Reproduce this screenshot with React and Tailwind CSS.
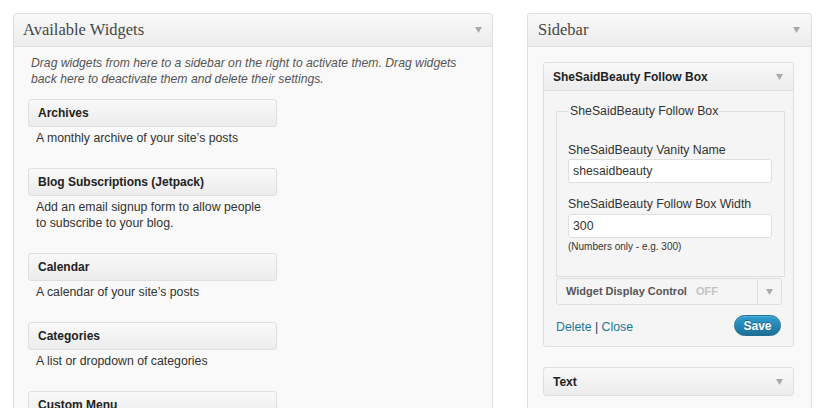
import React from "react";

const Arrow = ({ className = "" }) => (
  <svg width="7" height="6" viewBox="0 0 7 6" className={className}>
    <path d="M0 0 L7 0 L3.5 6 Z" fill="#a9a9a9" />
  </svg>
);

const sans = { fontFamily: '"Liberation Sans", Arial, sans-serif' };
const serif = { fontFamily: '"Liberation Serif", Georgia, serif' };

function WidgetItem({ title, desc }) {
  return (
    <div className="mb-[22px]">
      <div className="w-[249px] h-[28px] border border-[#dfdfdf] rounded-[3px] bg-gradient-to-b from-[#f9f9f9] to-[#ececec] flex items-center pl-[9px] text-[12px] font-bold text-[#222]">
        {title}
      </div>
      <div className="mt-[3px] pl-[8px] w-[236px] text-[12.3px] leading-[16px] text-[#333]">{desc}</div>
    </div>
  );
}

export default function App() {
  return (
    <div className="w-[824px] h-[408px] overflow-hidden bg-white flex items-start gap-[34px] pl-[13px] pt-[13px]" style={sans}>
      {/* Left panel */}
      <div className="w-[480px] h-[420px] overflow-hidden border border-[#dfdfdf] rounded-[3px] bg-[#f9f9f9] flex flex-col shrink-0">
        <div className="h-[33px] shrink-0 border-b border-[#dfdfdf] bg-gradient-to-b from-[#f9f9f9] to-[#ececec] flex items-center justify-between pl-[9px] pr-[10px] rounded-t-[3px]">
          <span className="text-[16.5px] text-[#464646]" style={serif}>Available Widgets</span>
          <Arrow />
        </div>
        <div className="pl-[14px] pt-[8px]">
          <p className="pl-[3px] italic text-[12.2px] leading-[16px] text-[#555] w-[450px] mb-[12px]">
            Drag widgets from here to a sidebar on the right to activate them. Drag widgets back here to deactivate them and delete their settings.
          </p>
          <WidgetItem title="Archives" desc="A monthly archive of your site’s posts" />
          <WidgetItem title="Blog Subscriptions (Jetpack)" desc="Add an email signup form to allow people to subscribe to your blog." />
          <WidgetItem title="Calendar" desc="A calendar of your site’s posts" />
          <WidgetItem title="Categories" desc="A list or dropdown of categories" />
          <WidgetItem title="Custom Menu" desc="Use this widget to add one of your custom menus as a widget." />
        </div>
      </div>

      {/* Right panel */}
      <div className="w-[285px] h-[420px] overflow-hidden border border-[#dfdfdf] rounded-[3px] bg-[#f9f9f9] flex flex-col shrink-0">
        <div className="h-[33px] shrink-0 border-b border-[#dfdfdf] bg-gradient-to-b from-[#f9f9f9] to-[#ececec] flex items-center justify-between pl-[10px] pr-[11px] rounded-t-[3px]">
          <span className="text-[16.5px] text-[#464646]" style={serif}>Sidebar</span>
          <Arrow />
        </div>
        <div className="pl-[15px] pt-[15px]">
          {/* Expanded widget */}
          <div className="w-[251px] border border-[#dfdfdf] rounded-[3px] bg-[#f5f5f5]">
            <div className="h-[28px] border-b border-[#dfdfdf] bg-gradient-to-b from-[#f9f9f9] to-[#ececec] flex items-center justify-between pl-[9px] pr-[10px] rounded-t-[3px]">
              <span className="text-[12px] font-bold text-[#222]">SheSaidBeauty Follow Box</span>
              <Arrow />
            </div>
            <div className="pl-[12px] pr-[10px] pt-[12px] pb-[10px]">
              {/* fieldset */}
              <div className="mt-[8px] w-[229px] border border-[#dfdfdf] pl-[11px] pr-[11px] pb-[21px]">
                <div className="-mt-[9px] ml-[1px] w-fit px-[1px] bg-[#f5f5f5] text-[12.3px] leading-[16px] text-[#333]">SheSaidBeauty Follow Box</div>
                <div className="mt-[23px] text-[12.3px] leading-[16px] text-[#333]">SheSaidBeauty Vanity Name</div>
                <div className="mt-[1px] w-[204px] h-[24px] border border-[#dfdfdf] rounded-[3px] bg-white pl-[4px] text-[12.3px] text-[#333] flex items-center">shesaidbeauty</div>
                <div className="mt-[13px] text-[12.3px] leading-[16px] text-[#333]">SheSaidBeauty Follow Box Width</div>
                <div className="mt-[2px] w-[204px] h-[24px] border border-[#dfdfdf] rounded-[3px] bg-white pl-[4px] text-[12.3px] text-[#333] flex items-center">300</div>
                <div className="mt-[1px] text-[10px] leading-[16px] text-[#333]">(Numbers only - e.g. 300)</div>
              </div>
              <div className="mt-[1px] w-[226px] h-[27px] border border-[#dfdfdf] rounded-[3px] bg-[#f5f5f5] flex items-stretch">
                <div className="flex-1 flex items-center pl-[9px] text-[11px] font-bold">
                  <span className="text-[#555]">Widget Display Control</span>
                  <span className="ml-[9px] text-[#c4c4c4]">OFF</span>
                </div>
                <div className="w-[24px] border-l border-[#dfdfdf] flex items-center justify-center">
                  <Arrow />
                </div>
              </div>
              <div className="mt-[10px] flex items-center justify-between pr-[2px]">
                <span className="text-[12.3px] text-[#21759b] mt-[3px]">Delete <span className="text-[#2a3a6a]">|</span> Close</span>
                <span className="h-[21px] w-[47px] rounded-full bg-gradient-to-b from-[#2e9fd2] to-[#1e6f96] border border-[#1f6e93] text-white text-[12px] font-bold flex items-center justify-center shadow-[inset_0_1px_0_rgba(120,200,230,0.5)] [text-shadow:0_-1px_0_rgba(0,0,0,0.3)]">Save</span>
              </div>
            </div>
          </div>
          {/* Text widget */}
          <div className="mt-[20px] w-[251px] h-[29px] border border-[#dfdfdf] rounded-[3px] bg-gradient-to-b from-[#f9f9f9] to-[#ececec] flex items-center justify-between pl-[9px] pr-[10px]">
            <span className="text-[12px] font-bold text-[#222]">Text</span>
            <Arrow />
          </div>
        </div>
      </div>
    </div>
  );
}
